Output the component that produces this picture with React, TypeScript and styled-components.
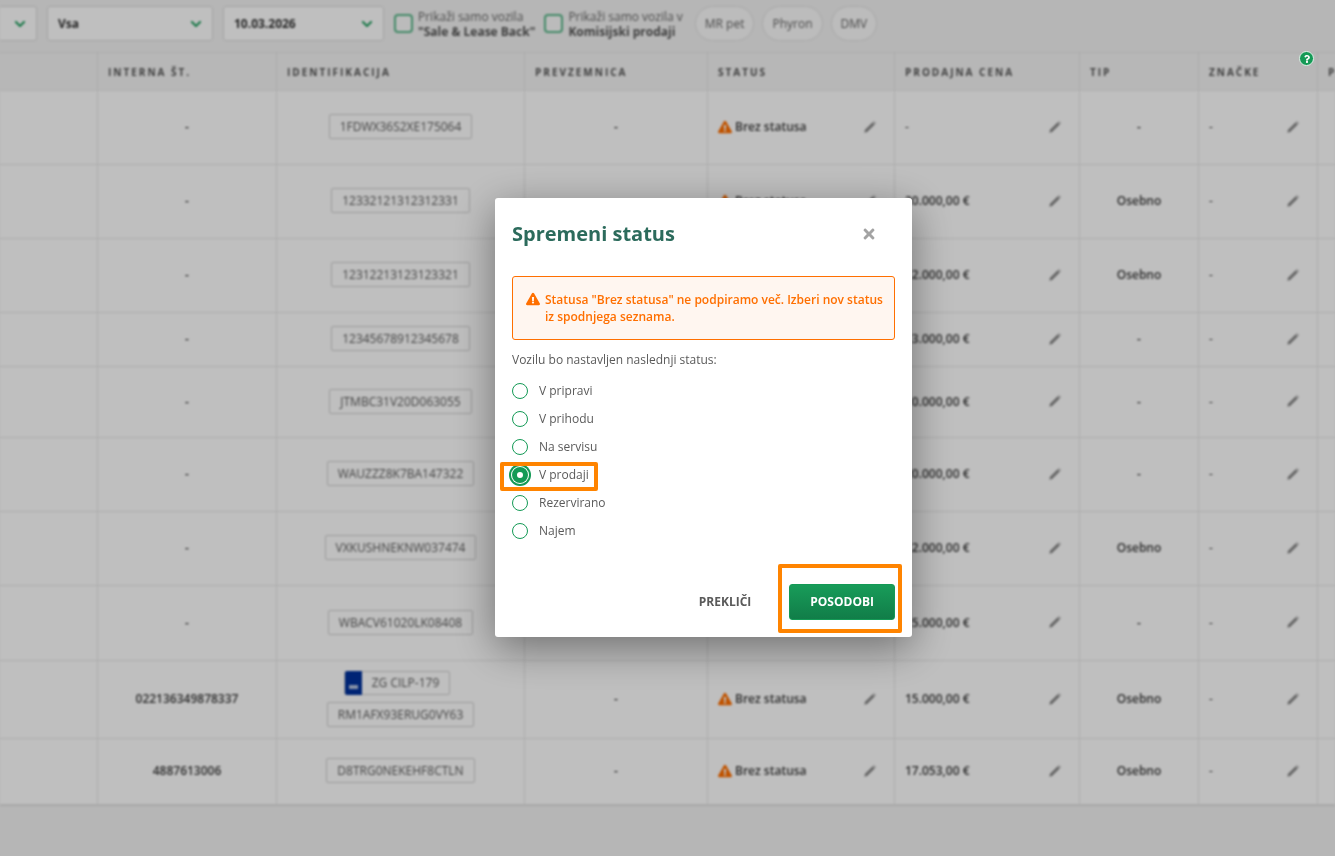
import React, { useState } from "react";
import styled, { createGlobalStyle, css } from "styled-components";
import { FaChevronDown, FaExclamationTriangle, FaQuestion, FaTimes } from "react-icons/fa";

const green = "#149a56";
const orange = "#ff6f00";
const marker = "#ff8400";
const line = "#e6e6e6";

const GlobalStyle = createGlobalStyle`
  *, *::before, *::after { box-sizing: border-box; }
  html { background: #f3f3f3; }
  body {
    margin: 0;
    font-family: "Open Sans", "Noto Sans", sans-serif;
    font-size: 12px;
    color: #5a5a5a;
  }
  button, select, input { font-family: inherit; }
`;

const Page = styled.div`
  min-height: 100vh;
  overflow: hidden;
  background: #f3f3f3;
  filter: blur(1.2px);
`;

const Toolbar = styled.div`
  display: flex;
  align-items: center;
  padding: 6px 0 11px;
`;

const SelectBox = styled.div<{ $width: number; $open?: boolean }>`
  position: relative;
  flex: none;
  width: ${(p) => p.$width}px;
  margin-right: 10px;

  select {
    appearance: none;
    display: block;
    width: 100%;
    height: 35px;
    padding: 0 24px 0 ${(p) => (p.$open ? 0 : 10)}px;
    border: 1px solid #dcdcdc;
    border-left-width: ${(p) => (p.$open ? 0 : 1)}px;
    border-radius: ${(p) => (p.$open ? "0 3px 3px 0" : "3px")};
    background: #fff;
    color: #333;
    font-size: 12px;
    font-weight: 700;
  }

  svg {
    position: absolute;
    top: 12px;
    right: 11px;
    color: ${green};
    pointer-events: none;
  }
`;

const CheckLabel = styled.label`
  display: flex;
  align-items: center;
  gap: 5px;
  margin-right: 9px;
  line-height: 15px;
  white-space: nowrap;
  color: #666;

  input {
    appearance: none;
    width: 19px;
    height: 19px;
    margin: 0;
    border: 2px solid #5ab88a;
    border-radius: 4px;
    background: #fafafa;
  }

  strong {
    display: block;
    color: #555;
  }
`;

const Pills = styled.div`
  display: flex;
  gap: 8px;
  margin-left: 3px;
`;

const Pill = styled.button`
  height: 35px;
  padding: 0 9px;
  border: 1px solid #e0e0e0;
  border-radius: 18px;
  background: #fbfbfb;
  color: #666;
  font-size: 12px;
`;

const Table = styled.table`
  width: 100%;
  min-width: 1500px;
  table-layout: fixed;
  border-collapse: separate;
  border-spacing: 0;
  border-top: 1px solid ${line};
  border-bottom: 1px solid #ddd;
`;

const Th = styled.th`
  height: 38px;
  padding: 0 9px 0 10px;
  border-right: 1px solid ${line};
  border-bottom: 1px solid #ececec;
  background: #f4f4f4;
  color: #555;
  font-size: 10px;
  font-weight: 700;
  letter-spacing: 2px;
  text-align: left;
  text-transform: uppercase;
  white-space: nowrap;
`;

const Row = styled.tr<{ $height: number }>`
  height: ${(p) => p.$height}px;
`;

const Td = styled.td`
  padding: 0 10px 2px;
  border-right: 1px solid ${line};
  border-bottom: 1px solid ${line};
  background: #fff;
  color: #3c3c3c;
  font-weight: 600;
  text-align: center;
`;

const Editable = styled.div<{ $light?: boolean }>`
  display: flex;
  align-items: center;
  justify-content: space-between;
  padding-right: 8px;
  font-weight: ${(p) => (p.$light ? 400 : 600)};
`;

const StatusText = styled.span`
  display: flex;
  align-items: center;
  gap: 3px;

  svg { color: ${orange}; }
`;

const EditButton = styled.button`
  display: flex;
  padding: 0;
  border: 0;
  background: none;
  color: #8c8c8c;
`;

const Ids = styled.div`
  display: flex;
  flex-direction: column;
  align-items: center;
  gap: 7px;
`;

const Tag = styled.span`
  display: flex;
  align-items: center;
  height: 25px;
  padding: 0 10px;
  border: 1px solid #d0d0d0;
  border-radius: 2px;
  color: #5c5c5c;
  font-weight: 400;
`;

const Plate = styled(Tag)`
  height: 24px;
  gap: 10px;
  margin-right: 7px;
  padding-left: 0;
`;

const PlateCountry = styled.span`
  display: flex;
  align-items: flex-end;
  justify-content: center;
  width: 17px;
  height: 24px;
  padding-bottom: 6px;
  border-radius: 2px 0 0 2px;
  background: #00319c;

  &::after {
    content: "";
    width: 9px;
    height: 4px;
    background: #b4c2e0;
  }
`;

const Overlay = styled.div`
  position: fixed;
  inset: 0;
  display: flex;
  align-items: flex-start;
  justify-content: center;
  padding: 198px 0 0 72px;
  background: rgba(0, 0, 0, 0.25);
`;

const HelpButton = styled.button`
  position: absolute;
  top: 51px;
  right: 21px;
  display: flex;
  align-items: center;
  justify-content: center;
  width: 15px;
  height: 15px;
  padding: 0;
  border: 1px solid #dff0e7;
  border-radius: 50%;
  background: ${green};
  color: #fff;
`;

const Dialog = styled.form`
  width: 417px;
  padding: 20px 17px 17px;
  border-radius: 3px;
  background: #fff;
  box-shadow: 0 11px 42px rgba(0, 0, 0, 0.42);
`;

const DialogHeader = styled.header`
  display: flex;
  align-items: center;
  justify-content: space-between;
  padding-right: 18px;
  margin-bottom: 26px;
`;

const Title = styled.h2`
  margin: 0;
  color: #2c6b5c;
  font-size: 20px;
  line-height: 32px;
  font-weight: 700;
`;

const CloseButton = styled.button`
  display: flex;
  padding: 0 0 1px;
  border: 0;
  background: none;
  color: #a3a3a3;
`;

const Alert = styled.div`
  display: flex;
  gap: 5px;
  padding: 14px 4px 14px 13px;
  border: 1px solid ${orange};
  border-radius: 3px;
  background: #fff6f0;
  color: ${orange};
  font-weight: 600;
  line-height: 17px;

  svg {
    flex: none;
    margin-top: 1px;
  }

  p { margin: 0; }
`;

const Options = styled.fieldset`
  min-width: 0;
  margin: 11px 0 0;
  padding: 0;
  border: 0;

  legend {
    padding: 0;
    margin-bottom: 9px;
    line-height: 17px;
  }
`;

const highlight = css`
  content: "";
  position: absolute;
  border: 4px solid ${marker};
  border-radius: 2px;
  pointer-events: none;
`;

const Option = styled.label<{ $marked: boolean }>`
  position: relative;
  display: flex;
  align-items: center;
  gap: 11px;
  width: max-content;
  height: 28px;

  span { padding-bottom: 2px; }

  ${(p) =>
    p.$marked &&
    css`
      &::after {
        ${highlight}
        inset: 1px -9px -2px -12px;
      }
    `}
`;

const Radio = styled.input`
  appearance: none;
  width: 16px;
  height: 16px;
  margin: 0;
  border: 1px solid ${green};
  border-radius: 50%;
  background: #fff;

  &:checked {
    border-width: 5px;
    box-shadow: 0 0 0 1px #fff, 0 0 0 3px ${green};
  }
`;

const Actions = styled.footer`
  display: flex;
  justify-content: flex-end;
  gap: 17px;
  margin-top: 39px;
`;

const Button = styled.button`
  position: relative;
  height: 36px;
  padding: 0 21px 2px;
  border: 0;
  border-radius: 3px;
  background: none;
  color: #5a5a5a;
  font-size: 12px;
  font-weight: 700;
`;

const PrimaryButton = styled(Button)`
  border: 1px solid #149a56;
  padding: 0 20px 2px;
  background: linear-gradient(#189c59, #117d48);
  color: #fff;

  &::after {
    ${highlight}
    inset: -21px -8px -14px -12px;
  }
`;

const headings = ["", "Interna št.", "Identifikacija", "Prevzemnica", "Status", "Prodajna cena", "Tip", "Značke", "Plačilo"];
const columnWidths = [98, 179, 248, 183, 187, 185, 119, 119];

type Vehicle = { height: number; internal?: string; plate?: string; vin: string; price: string; type?: string };

const vehicles: Vehicle[] = [
  { height: 74, vin: "1FDWX36S2XE175064", price: "-" },
  { height: 74, vin: "12332121312312331", price: "20.000,00 €", type: "Osebno" },
  { height: 74, vin: "12312213123123321", price: "12.000,00 €", type: "Osebno" },
  { height: 54, vin: "12345678912345678", price: "13.000,00 €" },
  { height: 71, vin: "JTMBC31V20D063055", price: "10.000,00 €" },
  { height: 74, vin: "WAUZZZ8K7BA147322", price: "20.000,00 €" },
  { height: 74, vin: "VXKUSHNEKNW037474", price: "12.000,00 €", type: "Osebno" },
  { height: 75, vin: "WBACV61020LK08408", price: "15.000,00 €" },
  { height: 78, internal: "022136349878337", plate: "ZG CILP-179", vin: "RM1AFX93ERUG0VY63", price: "15.000,00 €", type: "Osebno" },
  { height: 66, internal: "4887613006", vin: "D8TRG0NEKEHF8CTLN", price: "17.053,00 €", type: "Osebno" },
];

const statuses = ["V pripravi", "V prihodu", "Na servisu", "V prodaji", "Rezervirano", "Najem"];

function Edit({ label }: { label: string }) {
  return (
    <EditButton type="button" aria-label={label}>
      <svg width="12" height="12" viewBox="0 0 12 12" fill="currentColor">
        <path d="M0.3 11.7 1 8.8 8.6 1.2 10.8 3.4 3.2 11Z" />
        <path d="M9.1 0.8 9.8 0.2 11.8 2.2 11.2 2.9Z" />
      </svg>
    </EditButton>
  );
}

function Filter({ label, value, width, open }: { label: string; value: string; width: number; open?: boolean }) {
  return (
    <SelectBox $width={width} $open={open}>
      <select aria-label={label} defaultValue={value}>
        <option>{value}</option>
      </select>
      <FaChevronDown size={12} />
    </SelectBox>
  );
}

function VehicleRow({ v }: { v: Vehicle }) {
  return (
    <Row $height={v.height}>
      <Td />
      <Td>{v.internal ?? "-"}</Td>
      <Td>
        <Ids>
          {v.plate && (
            <Plate>
              <PlateCountry />
              {v.plate}
            </Plate>
          )}
          <Tag>{v.vin}</Tag>
        </Ids>
      </Td>
      <Td>-</Td>
      <Td>
        <Editable>
          <StatusText>
            <FaExclamationTriangle size={14} />
            Brez statusa
          </StatusText>
          <Edit label="Uredi status" />
        </Editable>
      </Td>
      <Td>
        <Editable $light={v.price === "-"}>
          {v.price}
          <Edit label="Uredi ceno" />
        </Editable>
      </Td>
      <Td>{v.type ?? "-"}</Td>
      <Td>
        <Editable $light>
          -
          <Edit label="Uredi značke" />
        </Editable>
      </Td>
      <Td />
    </Row>
  );
}

export default function App() {
  const [status, setStatus] = useState("V prodaji");

  return (
    <>
      <GlobalStyle />
      <Page>
        <Toolbar>
          <Filter label="Lokacija" value="" width={37} open />
          <Filter label="Vozila" value="Vsa" width={166} />
          <Filter label="Datum" value="10.03.2026" width={161} />
          <CheckLabel>
            <input type="checkbox" />
            <span>
              Prikaži samo vozila
              <strong>"Sale &amp; Lease Back"</strong>
            </span>
          </CheckLabel>
          <CheckLabel>
            <input type="checkbox" />
            <span>
              Prikaži samo vozila v<strong>Komisijski prodaji</strong>
            </span>
          </CheckLabel>
          <Pills>
            <Pill type="button">MR pet</Pill>
            <Pill type="button">Phyron</Pill>
            <Pill type="button">DMV</Pill>
          </Pills>
        </Toolbar>
        <Table>
          <colgroup>
            {columnWidths.map((w, i) => (
              <col key={i} width={w} />
            ))}
            <col />
          </colgroup>
          <thead>
            <tr>
              {headings.map((h) => (
                <Th key={h}>{h}</Th>
              ))}
            </tr>
          </thead>
          <tbody>
            {vehicles.map((v) => (
              <VehicleRow key={v.vin} v={v} />
            ))}
          </tbody>
        </Table>
      </Page>
      <Overlay>
        <HelpButton type="button" aria-label="Pomoč">
          <FaQuestion size={8} />
        </HelpButton>
        <Dialog role="dialog" aria-modal="true" aria-labelledby="dialog-title" onSubmit={(e) => e.preventDefault()}>
          <DialogHeader>
            <Title id="dialog-title">Spremeni status</Title>
            <CloseButton type="button" aria-label="Zapri">
              <FaTimes size={16} />
            </CloseButton>
          </DialogHeader>
          <Alert role="alert">
            <FaExclamationTriangle size={14} />
            <p>Statusa "Brez statusa" ne podpiramo več. Izberi nov status iz spodnjega seznama.</p>
          </Alert>
          <Options>
            <legend>Vozilu bo nastavljen naslednji status:</legend>
            {statuses.map((s) => (
              <Option key={s} $marked={s === "V prodaji"}>
                <Radio type="radio" name="status" value={s} checked={status === s} onChange={() => setStatus(s)} />
                <span>{s}</span>
              </Option>
            ))}
          </Options>
          <Actions>
            <Button type="button">PREKLIČI</Button>
            <PrimaryButton type="submit">POSODOBI</PrimaryButton>
          </Actions>
        </Dialog>
      </Overlay>
    </>
  );
}
